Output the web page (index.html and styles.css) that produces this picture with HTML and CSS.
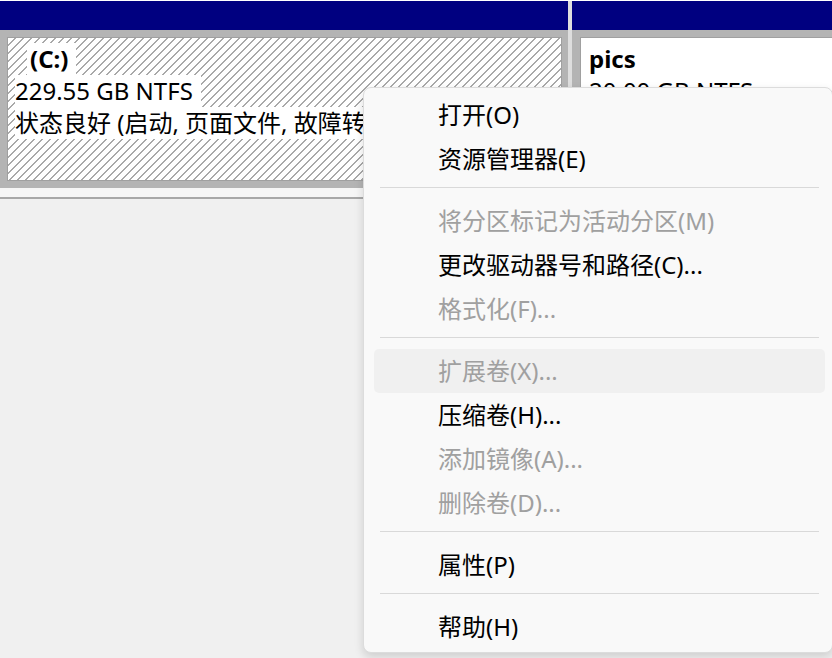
FILE: index.html
```html
<!DOCTYPE html>
<html lang="zh-CN">
<head>
<meta charset="utf-8">
<title>磁盘管理</title>
<link rel="stylesheet" href="styles.css">
</head>
<body>
<div class="disk">
  <div class="part part-c">
    <div class="head"></div>
    <div class="frame">
      <div class="box hatched">
        <div class="ln"><span class="txt lbl">(C:)</span></div>
        <div class="ln"><span class="txt">229.55 GB NTFS</span></div>
        <div class="ln"><span class="txt">状态良好 (启动, 页面文件, 故障转储, 基本数据分区)</span></div>
      </div>
    </div>
  </div>
  <div class="part part-p">
    <div class="head"></div>
    <div class="frame">
      <div class="box plain">
        <div class="ln"><span class="txt name">pics</span></div>
        <div class="ln"><span class="txt">20.00 GB NTFS</span></div>
        <div class="ln"><span class="txt">状态良好 (基本数据分区)</span></div>
      </div>
    </div>
  </div>
</div>
<div class="strip"></div>
<div class="rule"></div>

<div class="menu">
  <div class="item">打开(O)</div>
  <div class="item">资源管理器(E)</div>
  <div class="sep"></div>
  <div class="item dis">将分区标记为活动分区(M)</div>
  <div class="item">更改驱动器号和路径(C)...</div>
  <div class="item dis">格式化(F)...</div>
  <div class="sep"></div>
  <div class="item dis hl">扩展卷(X)...</div>
  <div class="item">压缩卷(H)...</div>
  <div class="item dis">添加镜像(A)...</div>
  <div class="item dis">删除卷(D)...</div>
  <div class="sep"></div>
  <div class="item">属性(P)</div>
  <div class="sep"></div>
  <div class="item">帮助(H)</div>
</div>
</body>
</html>
```

FILE: styles.css
```css
html, body {
  margin: 0;
  padding: 0;
  overflow: hidden;
}

body {
  width: 832px;
  height: 658px;
  position: relative;
  background: #f0f0f0;
  font-family: "Noto Sans", "Noto Sans CJK SC", sans-serif;
  font-size: 24px;
  color: #000;
}

.disk {
  display: flex;
  gap: 4px;
  height: 187px;
  border-top: 1px solid #ffffff;
  background: #dedede;
  overflow: hidden;
}

.part {
  flex: none;
  display: flex;
  flex-direction: column;
}

.part-c { width: 568px; }
.part-p { width: 320px; }

.head {
  height: 29px;
  background: #000080;
}

.frame {
  flex: 1;
  display: flex;
  background: #b4b4b4;
  padding: 7px 6px 7px 7px;
}

.part-p .frame {
  padding-left: 8px;
}

.box {
  flex: 1;
  min-width: 0;
  border: 1px solid #a0a0a0;
  padding-top: 5px;
  overflow: hidden;
}

.hatched {
  background-color: #ffffff;
  background-image: repeating-linear-gradient(135deg, transparent 0, transparent 4.7px, #a9a9a9 4.7px, #a9a9a9 5.66px);
}

.plain {
  background: #ffffff;
}

.ln {
  height: 32px;
  padding-left: 7px;
  white-space: nowrap;
}

.part-p .ln {
  padding-left: 8px;
}

.txt {
  display: inline-block;
  height: 32px;
  line-height: 32px;
  background: #ffffff;
  padding-right: 8px;
  vertical-align: top;
}

.lbl {
  font-weight: bold;
  margin-left: 12px;
  padding-left: 3px;
}

.name {
  font-weight: bold;
}

.strip {
  height: 9px;
  background: #f6f6f6;
}

.rule {
  height: 2px;
  background: #a8a8a8;
}

.menu {
  position: absolute;
  left: 363px;
  top: 87px;
  width: 470px;
  box-sizing: border-box;
  background: #f9f9f9;
  border: 1px solid #dcdcdc;
  border-radius: 8px;
  padding: 5px 0 3px;
  box-shadow: 0 4px 10px rgba(0, 0, 0, 0.14);
}

.item {
  height: 44px;
  line-height: 44px;
  margin: 0 7px 0 10px;
  padding-left: 64px;
  border-radius: 5px;
  white-space: nowrap;
  color: #000;
}

.item.dis {
  color: #a0a0a0;
}

.item.hl {
  background: #f0f0f0;
}

.sep {
  height: 1px;
  background: #d9d9d9;
  margin: 6px 13px 11px 16px;
}
```
